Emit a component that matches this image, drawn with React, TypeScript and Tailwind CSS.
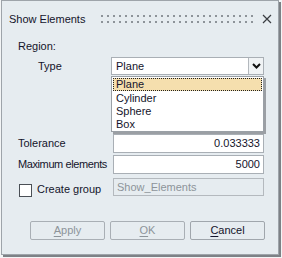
import React from "react";

const font = { fontFamily: '"Liberation Sans", Arial, sans-serif' };

function Mnemonic({ first, rest }: { first: string; rest: string }) {
  return (
    <span>
      <span className="underline underline-offset-2">{first}</span>
      {rest}
    </span>
  );
}

export default function App() {
  return (
    <div className="h-[258px] w-[282px] overflow-hidden whitespace-nowrap bg-[#f3f5f6] text-[11px] text-[#14142b]" style={font}>
      <div className="ml-px h-[255px] w-[278px] border border-[#9ea4aa] bg-[#e6ecf0] shadow-[2px_2px_0_#7d8186]">
        {/* title bar */}
        <div className="flex h-[36px] items-center pl-[7px]">
          <span className="leading-none">Show Elements</span>
          <div className="ml-[16px] grid h-[8px] w-[152px] grid-cols-[repeat(26,2px)] grid-rows-[2px_2px] content-between justify-between">
            {Array.from({ length: 52 }).map((_, i) => (
              <span key={i} className="h-[2px] w-[2px] bg-[#8d9399]" />
            ))}
          </div>
          <svg className="ml-[9px]" width="10" height="10" viewBox="0 0 10 10">
            <path d="M1 1 L9 9 M9 1 L1 9" stroke="#3a3d42" strokeWidth="1.2" />
          </svg>
        </div>

        <div className="pl-[16px] pr-[13px]">
          <div className="mt-[2px] h-[14px] leading-[14px]">Region:</div>

          <div className="mt-[4px] flex h-[18px] items-center">
            <span className="ml-[20px] w-[73px]">Type</span>
            <div className="relative h-[18px] w-[153px]">
              <div className="flex h-[18px] border border-[#a9afb5] bg-white">
                <span className="flex-1 pl-[4px] leading-[16px]">Plane</span>
                <div className="flex w-[15px] items-center justify-center border-l border-[#b3b8bd] bg-[#f0f3f5]">
                  <svg width="9" height="6" viewBox="0 0 9 6">
                    <path d="M1 1 L4.5 4.5 L8 1" stroke="#111" strokeWidth="2" fill="none" />
                  </svg>
                </div>
              </div>
              <div className="absolute left-0 top-[19px] z-10 w-[153px] border border-[#9aa0a6] bg-white shadow-[2px_2px_0_#9b9fa4]">
                <div className="m-[1px] h-[13px] border border-dotted border-[#222] bg-[#f5dfae] pl-[2px] leading-[11px]">Plane</div>
                <div className="h-[13px] pl-[4px] leading-[13px]">Cylinder</div>
                <div className="h-[13px] pl-[4px] leading-[13px]">Sphere</div>
                <div className="h-[13px] pl-[4px] leading-[13px]">Box</div>
              </div>
            </div>
          </div>

          <div className="mt-[59px] flex h-[19px] items-center">
            <span className="w-[95px]">Tolerance</span>
            <div className="h-[19px] w-[151px] border border-[#a9afb5] bg-white pr-[3px] text-right leading-[17px]">0.033333</div>
          </div>
          <div className="mt-[2px] flex h-[19px] items-center">
            <span className="w-[95px] tracking-[-0.4px]">Maximum elements</span>
            <div className="h-[19px] w-[151px] border border-[#a9afb5] bg-white pr-[3px] text-right leading-[17px]">5000</div>
          </div>
          <div className="mt-[4px] flex h-[18px] items-center">
            <div className="flex w-[95px] items-center">
              <span className="ml-[1px] mt-[6px] h-[13px] w-[13px] border border-[#4a4f55] bg-white" />
              <span className="ml-[5px] mt-[4px]">Create group</span>
            </div>
            <div className="h-[18px] w-[151px] border border-[#b4b9be] bg-[#e6ecf0] pl-[3px] leading-[16px] text-[#8d949a]">Show_Elements</div>
          </div>

          <div className="mt-[25px] flex justify-end gap-[5px]">
            <button type="button" className="h-[19px] w-[75px] rounded-[2px] border border-[#a9afb5] bg-[#e6ecf0] text-[11px] leading-none text-[#8d949a]">
              <Mnemonic first="A" rest="pply" />
            </button>
            <button type="button" className="h-[19px] w-[75px] rounded-[2px] border border-[#a9afb5] bg-[#e6ecf0] text-[11px] leading-none text-[#8d949a]">
              <Mnemonic first="O" rest="K" />
            </button>
            <button type="button" className="h-[19px] w-[75px] rounded-[2px] border border-[#a0a6ac] bg-[#e6ecf0] text-[11px] leading-none text-[#14142b]">
              <Mnemonic first="C" rest="ancel" />
            </button>
          </div>
        </div>
      </div>
    </div>
  );
}
